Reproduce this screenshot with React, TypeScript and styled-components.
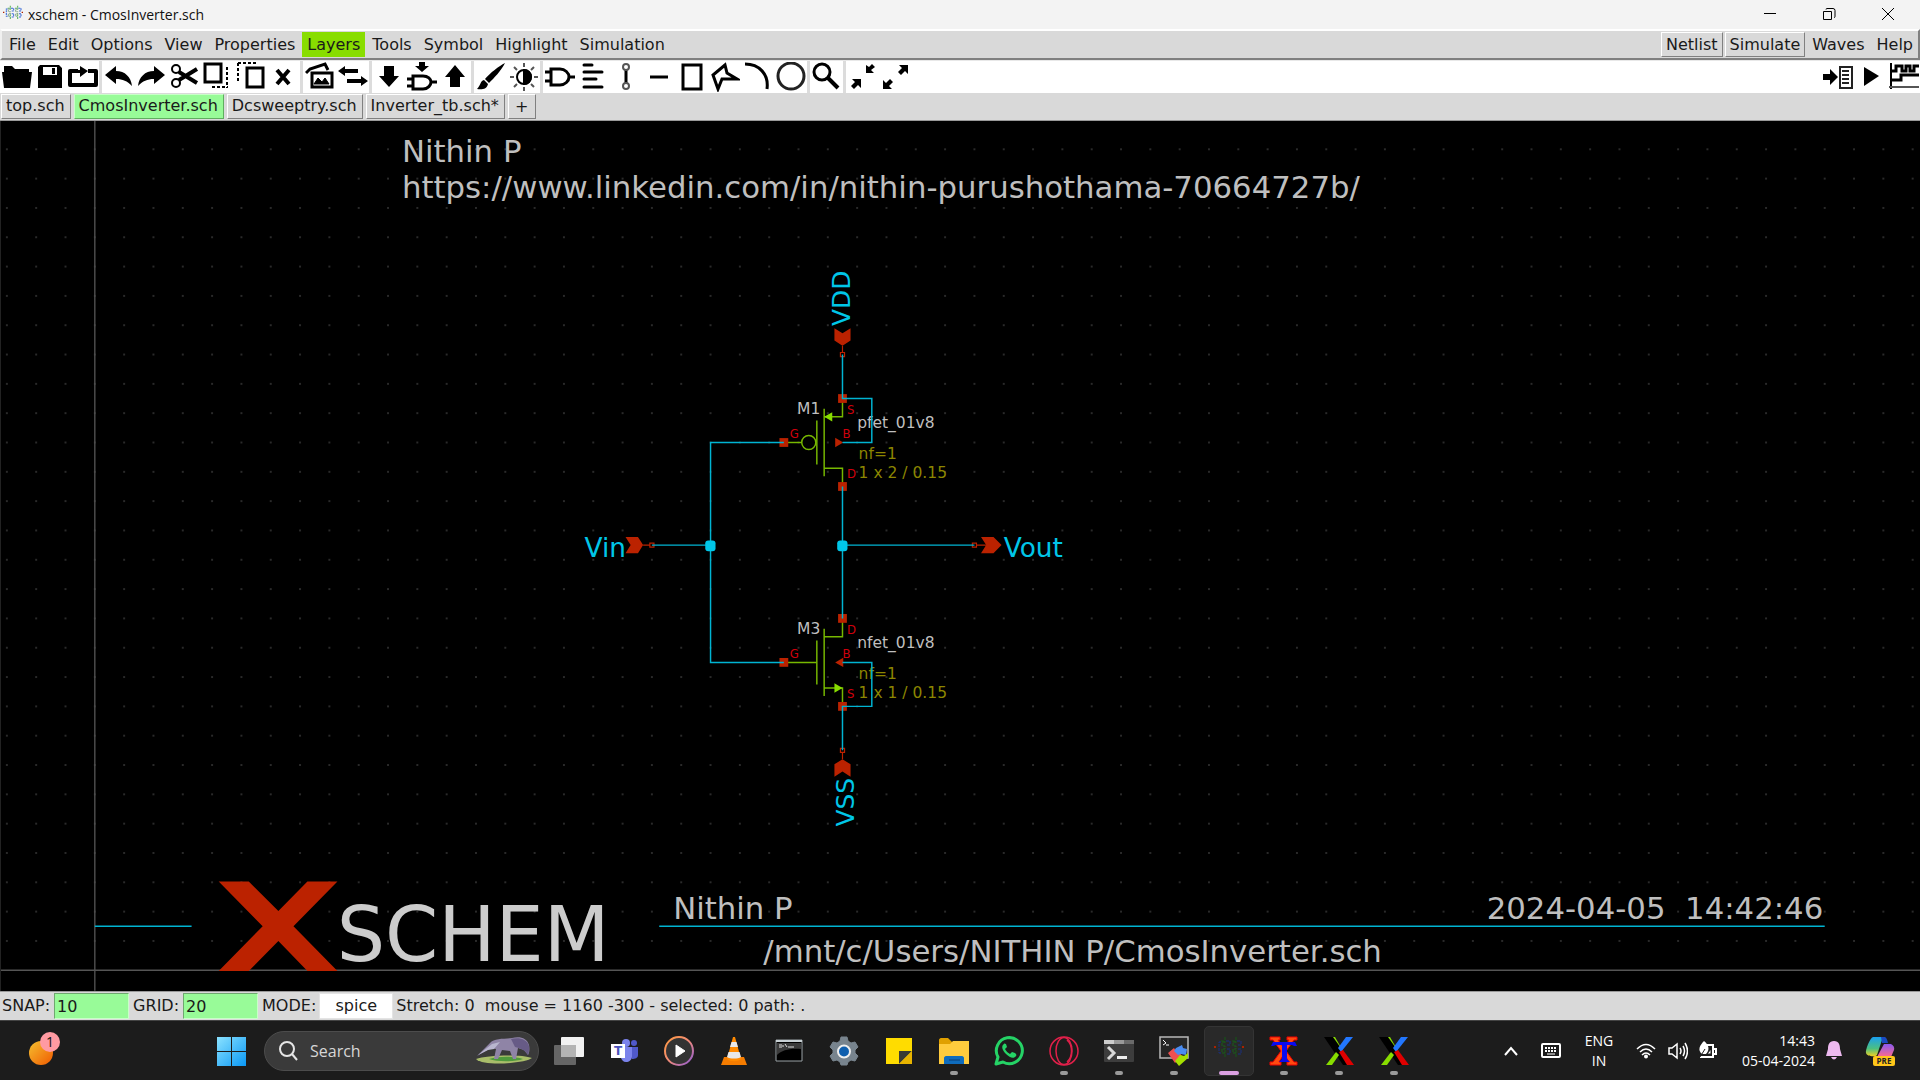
import React from 'react';
import styled, { createGlobalStyle } from 'styled-components';

const GlobalStyle = createGlobalStyle`
  * { box-sizing: border-box; }
  html, body { margin: 0; padding: 0; background: #000; }
  button, input { font: inherit; color: inherit; margin: 0; }
`;

const tkFont = '"DejaVu Sans", sans-serif';
const winFont = '"Open Sans", "Noto Sans", sans-serif';

const Screen = styled.div`
  display: flex;
  flex-direction: column;
  height: 100vh;
  min-height: 480px;
  overflow: hidden;
  font-family: ${tkFont};
  font-size: 16px;
  line-height: 20px;
  color: #1a1a1a;
`;

/* ---------- title bar ---------- */

const TitleBar = styled.header`
  display: flex;
  align-items: center;
  flex: none;
  height: 29px;
  padding: 0 3px;
  background: #f3f3f3;
  font-family: ${winFont};
  font-size: 14px;
  color: #111;
`;

const WindowTitle = styled.h1`
  flex: 1;
  margin: 0;
  padding-left: 5px;
  font-size: 14px;
  font-weight: 400;
`;

const WindowButton = styled.button`
  display: grid;
  place-items: center;
  width: 59px;
  height: 29px;
  padding: 0 0 1px;
  border: 0;
  background: transparent;
`;

/* ---------- menu bar ---------- */

const MenuBar = styled.nav`
  display: flex;
  align-items: center;
  gap: 2px;
  flex: none;
  height: 31px;
  padding: 0 0 0 2px;
  border: 2px solid;
  border-color: #fff #808080 #808080 #f0f0f0;
  background: #d9d9d9;
`;

const MenuButton = styled.button<{ $tone?: 'active' | 'raised' }>`
  height: 25px;
  padding: 0 4px;
  border: 1px solid transparent;
  border-color: ${p => (p.$tone === 'raised' ? '#fff #808080 #808080 #fff' : 'transparent')};
  background: ${p => (p.$tone === 'active' ? '#88dd00' : 'transparent')};
  line-height: 20px;
  white-space: nowrap;
`;

const Spacer = styled.div`
  flex: 1;
`;

/* ---------- tool bar ---------- */

const ToolBar = styled.div`
  display: flex;
  flex: none;
  height: 33px;
  border-top: 1px solid #e8e8e8;
  background: #fff;
`;

const ToolGroup = styled.div`
  display: flex;
  & + & { border-left: 3px solid #dcdcdc; }
`;

const ToolButton = styled.button`
  display: grid;
  place-items: center;
  width: 33px;
  height: 32px;
  padding: 0;
  border: 0;
  background: transparent;
  color: #000;
`;

/* ---------- tabs ---------- */

const TabBar = styled.div`
  display: flex;
  gap: 3px;
  flex: none;
  height: 28px;
  padding: 1px 0 1px 1px;
  border-bottom: 1px solid #999;
  background: #d9d9d9;
`;

const Tab = styled.button<{ $current?: boolean }>`
  padding: 0 5px 2px 4px;
  border: 1px solid;
  border-color: ${p => (p.$current ? '#c8ffc8 #5fae5f #5fae5f #c8ffc8' : '#fff #808080 #808080 #fff')};
  background: ${p => (p.$current ? '#98fb98' : '#d9d9d9')};
  white-space: nowrap;
`;

const AddTab = styled(Tab)`
  width: 28px;
  padding: 0;
`;

/* ---------- drawing area ---------- */

const Canvas = styled.main`
  flex: 1;
  min-height: 0;
  border-left: 1px solid #222;
  background: #000;
`;

const Sheet = styled.svg`
  display: block;
  width: 100%;
  height: 100%;
  font-family: ${tkFont};
  text { white-space: pre; }
`;

const labelSizes = { title: 21, port: 18, rail: 17, prop: 10.6, pin: 8, logo: 52 };

const Label = styled.text<{ $size: keyof typeof labelSizes; $fill: string }>`
  font-size: ${p => labelSizes[p.$size]}px;
  fill: ${p => p.$fill};
`;

const Wire = styled.path<{ $color?: string }>`
  fill: none;
  stroke: ${p => p.$color || '#00b4d2'};
  stroke-width: 1;
`;

/* ---------- status bar ---------- */

const StatusBar = styled.footer`
  display: flex;
  align-items: center;
  flex: none;
  height: 29px;
  padding-left: 2px;
  border-top: 1px solid #999;
  background: #d9d9d9;
  white-space: pre;
`;

const StatusField = styled.input`
  width: 75px;
  height: 26px;
  margin: 0 4px;
  padding: 0 2px;
  border: 1px solid;
  border-color: #6fa86f #c8ffc8 #c8ffc8 #6fa86f;
  background: #98fb98;
  outline: 0;
`;

const ModeButton = styled.button`
  width: 74px;
  height: 26px;
  margin: 0 3px;
  padding: 0;
  border: 1px solid #e4e4e4;
  background: #fff;
`;

/* ---------- task bar ---------- */

const TaskBar = styled.footer`
  display: flex;
  align-items: center;
  flex: none;
  height: 60px;
  border-top: 1px solid #444;
  background: #1c1c1c;
  color: #fff;
  font-family: ${winFont};
`;

const WeatherButton = styled.button`
  width: 207px;
  height: 50px;
  padding: 0 0 4px 26px;
  border: 0;
  background: transparent;
  text-align: left;
  svg { display: block; }
`;

const TaskButton = styled.button<{ $state?: 'open' | 'active' }>`
  position: relative;
  display: grid;
  place-items: center;
  width: 50px;
  height: 50px;
  margin-right: 5px;
  padding: 0;
  border: 1px solid ${p => (p.$state === 'active' ? '#343434' : 'transparent')};
  border-radius: 5px;
  background: ${p => (p.$state === 'active' ? '#292929' : 'transparent')};
  &::after {
    content: '';
    position: absolute;
    bottom: 0;
    left: 50%;
    width: ${p => (p.$state === 'active' ? 20 : 8)}px;
    height: ${p => (p.$state ? 4 : 0)}px;
    margin-left: ${p => (p.$state === 'active' ? -10 : -4)}px;
    border-radius: 2px;
    background: ${p => (p.$state === 'active' ? '#dba0e2' : '#9a9a9a')};
  }
`;

const SearchBox = styled.label`
  display: flex;
  align-items: center;
  width: 275px;
  height: 40px;
  margin: 0 5px 0 2px;
  padding: 0 5px 0 14px;
  border: 1px solid #4c4c4c;
  border-radius: 20px;
  background: #3a3a3a;
`;

const SearchInput = styled.input`
  flex: 1;
  min-width: 0;
  padding: 0 0 0 12px;
  border: 0;
  outline: 0;
  background: transparent;
  font-size: 16px;
  &::placeholder { color: #d6d6d6; opacity: 1; }
`;

const Tray = styled.div`
  display: flex;
  align-items: center;
  margin-left: auto;
  padding-right: 13px;
  svg { display: block; }
`;

const TrayButton = styled.button<{ $w: number }>`
  display: grid;
  place-items: center;
  width: ${p => p.$w}px;
  height: 44px;
  padding: 0;
  border: 0;
  background: transparent;
  font-size: 14px;
  line-height: 20px;
`;

const Clock = styled(TrayButton)`
  justify-items: end;
  align-content: center;
`;

const Lang = styled(TrayButton)`
  align-content: center;
`;

/* ---------- tool icons, each in a 30 x 30 box ---------- */

const toolIcons: Record<string, React.ReactNode> = {
  Open: <path d="M2 4h8l3 3h14v3H2zM0 10h30l-2 16H2z" fill="currentColor" />,
  Save: <path d="M5 3h19l3 3v20H3V5zM8 5v8h14V5zM17 6h3v6h-3z" fillRule="evenodd" fill="currentColor" />,
  Reload: <g><path d="M20 9h8v14H2V9h8" strokeWidth="4" strokeLinejoin="round" fill="none" stroke="currentColor" /><path d="M8 8h4V4l8 5-8 6v-4H8z" fill="currentColor" /></g>,
  Undo: <path d="M1 13L12 4v5c9 0 15 6 16 15-5-5-9-7-16-7v5z" fill="currentColor" />,
  Redo: <path d="M28 13L17 4v5C8 9 2 15 1 24c5-5 9-7 16-7v5z" fill="currentColor" />,
  Cut: <g fill="none" stroke="currentColor" strokeWidth="2"><circle cx="6" cy="7" r="4" /><circle cx="6" cy="21" r="4" /><path d="M9 10l18 11M9 18L27 7" strokeWidth="4" /></g>,
  Copy: <g fill="none" stroke="currentColor" strokeWidth="3"><path d="M2 2h16v18H2z" /><path d="M24 5v21M9 25h16" strokeDasharray="3 2" strokeWidth="2" /></g>,
  Paste: <g fill="none" stroke="currentColor" strokeWidth="3"><path d="M11 6h16v19H11z" /><path d="M2 1v20M2 1h18" strokeDasharray="3 2" strokeWidth="2" /></g>,
  Delete: <path d="M8 8l12 14M20 8L8 22" stroke="currentColor" strokeWidth="4" />,
  Merge: <g fill="none" stroke="currentColor" strokeWidth="3"><path d="M7 11h20v14H7z" /><path d="M1 11l4-4 15-5 3 6" /><path d="M9 22l4-6 4 4 3-4 4 6z" fill="currentColor" strokeWidth="1" /></g>,
  Swap: <path d="M0 9l7-5v3h13v4H7v3zM30 19l-7-5v3H9v4h14v3z" fill="currentColor" />,
  Descend: <path d="M10 4h10v10h5L15 25 5 14h5z" fill="currentColor" />,
  'Descend symbol': <g><path d="M12 0h6v4h4l-7 6-7-6h4z" fill="currentColor" /><path d="M6 14h10c5 0 8 3 8 6s-3 7-8 7H6zM0 17h6M0 24h6M24 20h6" fill="none" stroke="currentColor" strokeWidth="3" /></g>,
  Ascend: <path d="M10 25h10V15h5L15 3 5 15h5z" fill="currentColor" />,
  Brush: <path d="M29 1C23 4 14 11 9 17l4 4C18 16 25 9 29 1zM8 18c-4 1-3 5-7 9 5 1 10 0 11-5z" fill="currentColor" />,
  Theme: <g stroke="currentColor" fill="none" strokeWidth="2"><circle cx="15" cy="15" r="7" /><path d="M15 8a7 7 0 0 1 0 14z" fill="currentColor" /><path d="M15 1v4M15 25v4M1 15h4M25 15h4M5 5l3 3M22 22l3 3M25 5l-3 3M8 22l-3 3" stroke="#555" /></g>,
  Gate: <path d="M6 7h9c5 0 9 4 9 8s-4 8-9 8H6zM0 10h6M0 19h6M24 15h6" fill="none" stroke="currentColor" strokeWidth="3" />,
  Text: <path d="M6 3h8M6 10h18M6 17h12M6 25h18" stroke="currentColor" strokeWidth="3" strokeLinecap="round" />,
  Wire: <g fill="none"><path d="M15 8v13" stroke="#000" strokeWidth="3" /><circle cx="15" cy="5" r="3" stroke="#555" strokeWidth="2" /><circle cx="15" cy="24" r="3" stroke="#555" strokeWidth="2" /></g>,
  Line: <path d="M6 15h18" stroke="currentColor" strokeWidth="3" />,
  Rectangle: <path d="M6 3h18v24H6z" fill="none" stroke="currentColor" strokeWidth="3" />,
  Polygon: <path d="M15 3L3 13l5 14 4-10 15 0-10-6z" fill="none" stroke="currentColor" strokeWidth="3" />,
  Arc: <path d="M2 2c14 0 24 10 22 25" fill="none" stroke="currentColor" strokeWidth="3" />,
  Circle: <circle cx="15" cy="14" r="13" fill="none" stroke="#222" strokeWidth="3" />,
  Search: <g fill="none" stroke="currentColor"><circle cx="10" cy="10" r="8" strokeWidth="3" /><path d="M16 16l10 10" strokeWidth="4" /></g>,
  'Zoom box': <path d="M27 5l-4 3 3 3h-8V3l3 2 3-3zM3 24l4-4-3-3h9v9l-3-3-4 4z" fill="currentColor" />,
  'Zoom full': <path d="M17 10l4-4-3-3h9v9l-3-3-4 4zM12 20l-4 4 3 3H2v-9l3 3 4-4z" fill="currentColor" />,
  Netlist: <g><path d="M0 12h7V7l8 8-8 8v-5H0z" fill="currentColor" /><path d="M17 5h12v21H17zM19 9h7M19 13h7M19 17h7M19 21h7" fill="none" stroke="#222" strokeWidth="2" /></g>,
  Simulate: <path d="M8 5l15 9-15 10z" fill="currentColor" />,
  Waves: <g fill="none" stroke="#000"><path d="M2 1v26" strokeWidth="2" /><path d="M2 9h5V4h6v5h4V4h4v5h4V4h5M2 18h10v-5h18" strokeWidth="3" /><path d="M0 25h30" stroke="#555" strokeWidth="2" /></g>,
};

const Tool = ({ name }: { name: string }) => (
  <ToolButton aria-label={name}>
    <svg width="30" height="30" viewBox="0 0 30 30">{toolIcons[name]}</svg>
  </ToolButton>
);

const toolGroups = [
  ['Open', 'Save', 'Reload'],
  ['Undo', 'Redo', 'Cut', 'Copy', 'Paste', 'Delete'],
  ['Merge', 'Swap'],
  ['Descend', 'Descend symbol', 'Ascend'],
  ['Brush', 'Theme'],
  ['Gate', 'Text', 'Wire', 'Line', 'Rectangle', 'Polygon', 'Arc', 'Circle'],
  ['Search'],
  ['Zoom box', 'Zoom full'],
];

const menus = ['File', 'Edit', 'Options', 'View', 'Properties', 'Layers', 'Tools', 'Symbol', 'Highlight', 'Simulation'];

/* ---------- schematic parts, in schematic units ---------- */

const CYAN = '#00c6e8';
const RED = '#bb2200';
const GREEN = '#77b800';
const GREY = '#bfbfbf';
const OLIVE = '#8c8600';
const PIN_RED = '#d0000c';

const Pin = ({ x, y }: { x: number; y: number }) => (
  <rect x={x - 3} y={y - 3} width="6" height="6" fill={RED} />
);

const Node = ({ x, y }: { x: number; y: number }) => (
  <rect x={x - 3.6} y={y - 3.2} width="7" height="7.4" rx="2" fill={CYAN} />
);

// Port arrow with its pin at (x, y); at angle 0 the body lies to the left and points right.
const Port = ({ x, y, angle = 0 }: { x: number; y: number; angle?: number }) => (
  <g transform={`translate(${x} ${y}) rotate(${angle})`}>
    <path d="M-6 0L-9.5 5.5H-18L-14.5 0L-18 -5.5H-9.5Z" fill={RED} />
    <path d="M-6 0H-1.4M-1.4 -1.4H1.4V1.4H-1.4Z" fill="none" stroke={RED} strokeWidth="0.8" />
  </g>
);

const Fet = ({ y, name, model, size, p }: { y: number; name: string; model: string; size: string; p?: boolean }) => (
  <g>
    <Wire $color={GREEN} d={`M552.5 ${y - 15}V${y + 15}M557.5 ${y - 23}V${y + 23}M557.5 ${y - 17.5}H570V${y - 30}M557.5 ${y + 17.5}H570V${y + 30}`} />
    {p ? (
      <g>
        <Wire $color={GREEN} d={`M530 ${y}H542`} />
        <circle cx="547" cy={y} r="4.8" fill="none" stroke={GREEN} strokeWidth="1" />
        <path d={`M557.5 ${y - 17.5}l5.5 -3.2v6.4z`} fill="#88dd00" />
        <path d={`M565 ${y - 3.2}v6.4l5.5 -3.2z`} fill={RED} />
      </g>
    ) : (
      <g>
        <Wire $color={GREEN} d={`M530 ${y}H552.5`} />
        <path d={`M570 ${y + 17.5}l-5.5 -3.2v6.4z`} fill="#88dd00" />
        <path d={`M570.5 ${y - 3.2}v6.4l-5.5 -3.2z`} fill={RED} />
      </g>
    )}
    <Pin x={530} y={y} />
    <Pin x={570} y={y - 30} />
    <Pin x={570} y={y + 30} />
    <Label $size="pin" $fill={PIN_RED} x="534" y={y - 3}>G</Label>
    <Label $size="pin" $fill={PIN_RED} x="570" y={y - 3}>B</Label>
    <Label $size="pin" $fill={PIN_RED} x="573" y={y - 19.5}>{p ? 'S' : 'D'}</Label>
    <Label $size="pin" $fill={PIN_RED} x="573" y={y + 24.5}>{p ? 'D' : 'S'}</Label>
    <Label $size="prop" $fill={GREY} x="539" y={y - 19.5}>{name}</Label>
    <Label $size="prop" $fill={GREY} x="580" y={y - 10}>{model}</Label>
    <Label $size="prop" $fill={OLIVE} x="581" y={y + 11}>nf=1</Label>
    <Label $size="prop" $fill={OLIVE} x="581" y={y + 24}>{size}</Label>
  </g>
);

const Schematic = () => (
  <Sheet viewBox="-4 -19.3 1309 593" preserveAspectRatio="xMinYMin meet" role="img" aria-label="CMOS inverter schematic">
    <defs>
      <pattern id="grid" x="-10" y="-10" width="20" height="20" patternUnits="userSpaceOnUse">
        <rect x="9.5" y="9.5" width="1" height="1" fill="#4a4a4a" />
      </pattern>
    </defs>
    <rect x="-4" y="-10" width="1310" height="560" fill="url(#grid)" />
    <path d="M60 -20V574M-5 560H1306" stroke="#555" strokeWidth="0.9" />

    <Label $size="title" $fill={GREY} x="269.5" y="9">Nithin P</Label>
    <Label $size="title" $fill={GREY} x="269.5" y="33">https://www.linkedin.com/in/nithin-purushothama-70664727b/</Label>

    <Fet p y={200} name="M1" model="pfet_01v8" size="1 x 2 / 0.15" />
    <Fet y={350} name="M3" model="nfet_01v8" size="1 x 1 / 0.15" />

    <Port x={440} y={270} />
    <Port x={570} y={140} angle={90} />
    <Port x={570} y={410} angle={-90} />
    <g>
      <path d="M664.5 264.5H673L678.5 270L673 275.5H664.5L668 270Z" fill={RED} />
      <path d="M668 270H661.4M658.6 268.6H661.4V271.4H658.6Z" fill="none" stroke={RED} strokeWidth="0.8" />
    </g>

    <Wire d="M570 140V170H590V200H570M570 230V320M570 410V380H590V350H570M440 270H480M530 200H480V350H530M570 270H660" />
    <Node x={480} y={270} />
    <Node x={570} y={270} />

    <Label $size="port" $fill={CYAN} x="394" y="278">Vin</Label>
    <Label $size="port" $fill={CYAN} x="680" y="278">Vout</Label>
    <Label $size="rail" $fill={CYAN} transform="translate(575 120.5) rotate(-90)">VDD</Label>
    <Label $size="rail" $fill={CYAN} transform="translate(578 462) rotate(-90)">VSS</Label>

    <Wire d="M60 530H126M445 530H1240" />
    <path d="M144.5 499.500h20.500L185.200 519.500L205 499.500h20.500L195.500 530L225.500 560.500H205L185.200 540L165 560.500H144.500L174.500 530Z" fill={RED} />
    <Label $size="logo" $fill="#cccccc" x="225" y="554">SCHEM</Label>
    <Label $size="title" $fill={GREY} x="454.5" y="525">Nithin P</Label>
    <Label $size="title" $fill={GREY} x="516" y="554.5">/mnt/c/Users/NITHIN P/CmosInverter.sch</Label>
    <Label $size="title" $fill={GREY} x="1239" y="525" textAnchor="end">2024-04-05  14:42:46</Label>
  </Sheet>
);

/* ---------- task bar icons ---------- */

const XschemGlyph = ({ size, strong }: { size: number; strong?: boolean }) => (
  <svg width={size} height={size} viewBox="0 0 30 30" aria-hidden="true">
    <g fill="none" strokeWidth={strong ? 1.6 : 1} strokeDasharray="3 1">
      <path d="M11 1v6M11 14v7M22 1v6M22 14v7M7 5h4M18 5h4" stroke={strong ? '#5ab45a' : '#145a14'} />
      <path d="M11 6H8v4h3v3H8v4h3M22 6h-3v4h3v3h-3v4h3" stroke={strong ? '#88aa88' : '#186018'} />
      <path d="M7 6H5v11h3M12 5h4v4h-3M13 13h3v5h-4M23 5h4v4h-3M24 13h3v5h-4" stroke={strong ? '#3a6ad8' : '#1a3080'} />
    </g>
    <path d="M0 10h2v2H0zM28 10h2v2h-2z" fill="#aa2200" />
  </svg>
);

const taskIcons: Record<string, React.ReactNode> = {
  'Task view': <g><rect x="0" y="9" width="22" height="20" rx="1" fill="#656565" /><rect x="7" y="1" width="23" height="20" rx="1" fill="#f2f2f2" /><path d="M7 9h15v12H7z" fill="#b4b4b4" /></g>,
  Teams: <g><circle cx="17" cy="7" r="4" fill="#7b83eb" /><circle cx="25" cy="7" r="3" fill="#5059c9" /><path d="M21 11h8v8c0 3-3 4-6 4z" fill="#5059c9" /><path d="M12 11h11v9c0 4-3 6-6 6s-4-2-5-4z" fill="#7b83eb" /><path d="M2 8h14v14H2z" fill="#fff" /><text x="9" y="19" textAnchor="middle" fontFamily="DejaVu Sans" fontWeight="700" fontSize="12" fill="#4b53bc">T</text></g>,
  'Media player': <g><defs><linearGradient id="mp" x1="0" y1="0" x2="1" y2="1"><stop offset="0" stopColor="#ff9a3c" /><stop offset="0.5" stopColor="#f08a7a" /><stop offset="1" stopColor="#8a5ad8" /></linearGradient></defs><circle cx="15" cy="15" r="14" fill="#333" stroke="url(#mp)" strokeWidth="2" /><path d="M12 9v12l9-6z" fill="#fff" stroke="#fff" strokeLinejoin="round" /></g>,
  VLC: <g><path d="M5 21h20l3 8H2z" fill="#f57c00" /><path d="M14 1h2l6 22c-3 3-11 3-14 0z" fill="#ff8a00" /><path d="M12.500 6h5l1.500 5h-8zM9.500 16h11l1.500 5c-3 2-11 2-14 0z" fill="#e8e8e8" /></g>,
  'Command prompt': <g><path d="M2 4h26v21H2z" fill="#000" stroke="#9aa2a6" /><path d="M3 7h24v6C16 12 8 14 3 19z" fill="#3a3a3a" /><path d="M2 4h26v2H2z" fill="#c8d0d4" /><path d="M5 9h3M5 11h3M9 9v2M11 8l2 3M14 11h6" stroke="#ddd" /></g>,
  Settings: <g><path d="M12 1h6l1 4 3 2 4-1 3 5-3 3v3l3 3-3 5-4-1-3 2-1 3h-6l-1-3-3-2-4 1-3-5 3-3v-3l-3-3 3-5 4 1 3-2z" fill="#78848e" stroke="#78848e" strokeLinejoin="round" /><circle cx="15" cy="15.500" r="6" fill="#0f5fae" stroke="#eee" strokeWidth="2" /></g>,
  'Sticky notes': <g><path d="M2 2h26v26H2z" fill="#ffdc00" /><path d="M15 28V15h13L15 28z" fill="#3a3a34" /><path d="M28 15v13H15z" fill="#e8b400" /></g>,
  'File explorer': <g><path d="M0 4c0-1 1-2 2-2h7l4 4h17v22H0z" fill="#e0a000" /><path d="M0 8h11l3-3h16v23H0z" fill="#ffcb3d" /><path d="M5 28v-6c0-1 1-2 2-2h16c1 0 2 1 2 2v6z" fill="#0f6cbd" /><path d="M10 24h11" stroke="#0a3f78" /></g>,
  WhatsApp: <g><path d="M2 28l2-7a13 13 0 1 1 5 5z" fill="none" stroke="#25d366" strokeWidth="3" strokeLinejoin="round" /><path d="M10 8c-3 2-2 6 2 10s8 5 10 2c1-1 0-2-1-3l-3-1-2 2c-2-1-4-3-5-5l2-2-1-3c-1 0-2-1-2 0z" fill="#25d366" /></g>,
  Opera: <g fill="none" stroke="#e0204a" strokeWidth="1.500"><circle cx="15" cy="15" r="14" /><ellipse cx="15" cy="15" rx="8" ry="13.500" /><path d="M18 4c6 5 6 17 0 22" /></g>,
  Terminal: <g><path d="M0 5h30v20a1 1 0 0 1-1 1H1a1 1 0 0 1-1-1z" fill="#3d3d3d" /><path d="M0 4h10v4H0z" fill="#ccc" /><path d="M10 4h10v4H10z" fill="#999" /><path d="M20 4h10v4H20z" fill="#6a6a6a" /><path d="M4 11l6 6-6 6" fill="none" stroke="#d8d8d8" strokeWidth="3" /><path d="M13 20h10v3H13z" fill="#eee" /></g>,
  MobaXterm: <g><path d="M1 1h28v21H1z" fill="#262626" stroke="#b8b8b8" strokeWidth="1.500" /><path d="M4 4l3 3-3 2M7 9h3" stroke="#fff" fill="none" /><path d="M9 17l6-5 2 3 3 1 3 4-7 7z" fill="#f05050" /><path d="M15 15l2-3 6-3 1 3 4 1-1 6-5-1-3 1z" fill="#4a8cf0" /><path d="M16 25l5-6 4 1 4-3v5l-9 8z" fill="#a6e000" /></g>,
  XTerm: <g><path d="M1 1h10v3H9l6 8 5-8h-2V1h10v3h-3l-8 11 8 11h3v3H18v-3h2l-5-8-5 8h2v3H1v-3h3l8-11L4 4H1z" fill="#ff4a10" stroke="#e00" /><path d="M4 6h22l2 4h-3l-2-1h-5v14l3 3H10l3-3V9H7l-3 1H2z" fill="#0a0af0" /></g>,
  'Xming A': <g><path d="M6 1h5l8 14-4 1z" fill="#88dd00" /><path d="M0 1h9l20 28H19z" fill="#000" /><path d="M22 1h7L17 16l-3-4z" fill="#2277ff" /><path d="M15 16l4-2 11 15h-7z" fill="#e00000" /><path d="M2 29l10-13 3 3-7 10z" fill="#88dd00" /></g>,
};
taskIcons['Xming B'] = taskIcons['Xming A'];

const openApps = ['File explorer', 'Opera', 'Terminal', 'MobaXterm', 'XTerm', 'Xming A', 'Xming B'];

const Task = ({ name }: { name: string }) => (
  <TaskButton aria-label={name} $state={openApps.includes(name) ? 'open' : undefined}>
    <svg width="30" height="30" viewBox="0 0 30 30">{taskIcons[name]}</svg>
  </TaskButton>
);

export default function App() {
  return (
    <Screen>
      <GlobalStyle />
      <TitleBar>
        <XschemGlyph size={20} strong />
        <WindowTitle>xschem - CmosInverter.sch</WindowTitle>
        <WindowButton aria-label="Minimize"><svg width="14" height="14"><path d="M1 6.500h12" stroke="#000" /></svg></WindowButton>
        <WindowButton aria-label="Restore"><svg width="14" height="14"><path d="M1.500 4.500h8v8h-8zM4 2.500q0-1 1-1h6q2 0 2 2v6q0 1-1 1" fill="none" stroke="#000" /></svg></WindowButton>
        <WindowButton aria-label="Close"><svg width="14" height="14"><path d="M1 1l12 12M13 1L1 13" stroke="#000" /></svg></WindowButton>
      </TitleBar>

      <MenuBar>
        {menus.map(m => (
          <MenuButton key={m} $tone={m === 'Layers' ? 'active' : undefined}>{m}</MenuButton>
        ))}
        <Spacer />
        <MenuButton $tone="raised">Netlist</MenuButton>
        <MenuButton $tone="raised">Simulate</MenuButton>
        <MenuButton>Waves</MenuButton>
        <MenuButton>Help</MenuButton>
      </MenuBar>

      <ToolBar>
        {toolGroups.map(g => (
          <ToolGroup key={g[0]}>{g.map(n => <Tool key={n} name={n} />)}</ToolGroup>
        ))}
        <Spacer />
        <Tool name="Netlist" />
        <Tool name="Simulate" />
        <Tool name="Waves" />
      </ToolBar>

      <TabBar>
        <Tab>top.sch</Tab>
        <Tab $current>CmosInverter.sch</Tab>
        <Tab>Dcsweeptry.sch</Tab>
        <Tab>Inverter_tb.sch*</Tab>
        <AddTab>+</AddTab>
      </TabBar>

      <Canvas><Schematic /></Canvas>

      <StatusBar>
        <label htmlFor="snap">SNAP:</label>
        <StatusField id="snap" defaultValue="10" />
        <label htmlFor="grid-size">GRID:</label>
        <StatusField id="grid-size" defaultValue="20" />
        <label htmlFor="mode">MODE:</label>
        <ModeButton id="mode">spice</ModeButton>
        <span>{'Stretch: 0  mouse = 1160 -300 - selected: 0 path: .'}</span>
      </StatusBar>

      <TaskBar>
        <WeatherButton aria-label="Weather, 1 alert">
          <svg width="36" height="36" viewBox="0 0 36 36">
            <defs><linearGradient id="sun" x1="0" y1="0" x2="1" y2="1"><stop offset="0" stopColor="#f5c030" /><stop offset="1" stopColor="#f05a00" /></linearGradient></defs>
            <circle cx="15" cy="22" r="12" fill="url(#sun)" />
            <circle cx="24" cy="11" r="10" fill="#ff9aa2" />
            <text x="24" y="16" textAnchor="middle" fontFamily="Open Sans" fontSize="14" fill="#111">1</text>
          </svg>
        </WeatherButton>
        <TaskButton aria-label="Start">
          <svg width="30" height="30" viewBox="0 0 30 30">
            <defs><linearGradient id="win" x1="0" y1="0" x2="1" y2="1"><stop offset="0" stopColor="#8be2ff" /><stop offset="1" stopColor="#0a98f5" /></linearGradient></defs>
            <path d="M0 1h14v14H0zM15 1h14v14H15zM0 16h14v14H0zM15 16h14v14H15z" fill="url(#win)" />
          </svg>
        </TaskButton>
        <SearchBox>
          <svg width="19" height="20" viewBox="0 0 19 20"><g fill="none" stroke="#e6e6e6" strokeWidth="2"><circle cx="8" cy="8" r="7" /><path d="M13 13l5 6" /></g></svg>
          <SearchInput aria-label="Search" placeholder="Search" />
          <svg width="58" height="28" viewBox="0 0 58 28">
            <path d="M1 22c10-4 46-5 56-1-6 5-48 9-56 1z" fill="#a9bd6a" />
            <path d="M14 22c10-3 25-3 34 0-8 3-26 3-34 0z" fill="#4f9a3c" />
            <path d="M2 19L15 6c4-5 14-4 22-5 8-2 15 0 17 7 1 5 0 9-1 10l-4-5-6-2-2 11h-3l-3-8-8-1-4 9h-4l2-10-5-1z" fill="#8f84a6" />
            <path d="M36 2c8-2 16 0 18 7 0 4 0 7-1 9-3-5-8-7-13-8z" fill="#675b86" />
            <path d="M3 18L17 7l8-2-6 7-6 1z" fill="#b9b6cf" />
          </svg>
        </SearchBox>
        {['Task view', 'Teams', 'Media player', 'VLC', 'Command prompt', 'Settings', 'Sticky notes', 'File explorer', 'WhatsApp', 'Opera', 'Terminal', 'MobaXterm'].map(n => <Task key={n} name={n} />)}
        <TaskButton aria-label="xschem" $state="active"><XschemGlyph size={30} /></TaskButton>
        {['XTerm', 'Xming A', 'Xming B'].map(n => <Task key={n} name={n} />)}

        <Tray>
          <TrayButton $w={40} aria-label="Hidden icons"><svg width="16" height="16"><path d="M2 12l6-7 6 7" fill="none" stroke="#fff" strokeWidth="2" /></svg></TrayButton>
          <TrayButton $w={40} aria-label="Touch keyboard"><svg width="20" height="16"><rect x="1" y="1" width="18" height="13" rx="1" fill="none" stroke="#fff" strokeWidth="2" /><path d="M4 5h12M4 8h12" stroke="#fff" strokeWidth="2" strokeDasharray="2 1" /><path d="M6 11h8" stroke="#fff" /></svg></TrayButton>
          <Lang $w={56}><span>ENG</span><span>IN</span></Lang>
          <TrayButton $w={38} aria-label="Wi-Fi"><svg width="20" height="16"><g fill="none" stroke="#fff" strokeWidth="1.500"><path d="M1 6q9-9 18 0M4 9q6-6 12 0M6 12q4-4 8 0" /></g><circle cx="10" cy="13.500" r="2" fill="#fff" /></svg></TrayButton>
          <TrayButton $w={26} aria-label="Volume"><svg width="20" height="18"><g fill="none" stroke="#fff" strokeWidth="1.500"><path d="M1 6h3l5-4v14l-5-4H1zM12 6q2 3 0 6M15 4q3 5 0 10M17 1q5 8 0 16" /></g></svg></TrayButton>
          <TrayButton $w={32} aria-label="Battery"><svg width="20" height="20"><path d="M8 4h8v12H3M16 8h3v5h-3" fill="none" stroke="#fff" strokeWidth="2" /><path d="M7 0c5 4 6 9 2 13H5C0 9 3 4 7 0z" fill="#fff" /><path d="M3 16L8 8M10 13l4-5v5z" stroke="#1c1c1c" fill="#fff" /></svg></TrayButton>
          <Clock $w={92}><span>14:43</span><span>05-04-2024</span></Clock>
          <TrayButton $w={38} aria-label="Notifications"><svg width="18" height="20"><path d="M9 0c5 0 6 4 6 8l2 7H1l2-7c0-4 1-8 6-8zM6 16h6q-3 5-6 0z" fill="#edb9ef" /></svg></TrayButton>
          <TrayButton $w={54} aria-label="Copilot preview">
            <svg width="30" height="30" viewBox="0 0 30 30">
              <defs>
                <linearGradient id="cpA" x1="0" y1="0" x2="0" y2="1"><stop offset="0" stopColor="#1aa0f0" /><stop offset="0.600" stopColor="#4cc080" /><stop offset="1" stopColor="#f2d020" /></linearGradient>
                <linearGradient id="cpB" x1="0" y1="0" x2="0" y2="1"><stop offset="0" stopColor="#8a5af0" /><stop offset="1" stopColor="#ff6a88" /></linearGradient>
              </defs>
              <path d="M8 1h10l-6 18c-1 2-10 2-11-2C0 14 5 2 8 1z" fill="url(#cpA)" />
              <path d="M16 1h4q2 1 3 6h-6z" fill="#1a4ac0" />
              <path d="M19 8h7q4 2 3 6l-3 7H12z" fill="url(#cpB)" />
              <rect x="8" y="20" width="22" height="10" rx="2" fill="#ffc61a" />
              <text x="19" y="28" textAnchor="middle" fontFamily="Open Sans" fontWeight="700" fontSize="8" fill="#222">PRE</text>
            </svg>
          </TrayButton>
        </Tray>
      </TaskBar>
    </Screen>
  );
}
